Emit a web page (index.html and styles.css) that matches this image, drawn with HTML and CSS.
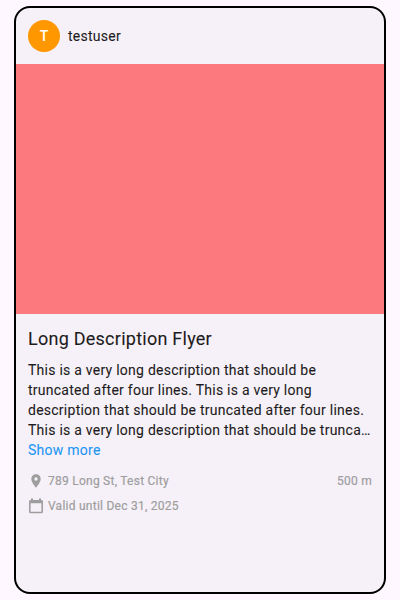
FILE: index.html
```html
<!DOCTYPE html>
<html lang="en">
<head>
<meta charset="utf-8">
<title>Flyer</title>
<link rel="stylesheet" href="styles.css">
</head>
<body>
<article class="card">
  <header class="user"><span class="avatar">T</span><span class="username">testuser</span></header>
  <div class="photo"></div>
  <div class="content">
    <h1 class="title">Long Description Flyer</h1>
    <p class="desc">This is a very long description that should be<br>truncated after four lines. This is a very long<br>description that should be truncated after four lines.<br>This is a very long description that should be trunca…</p>
    <a class="more">Show more</a>
    <div class="meta place">
      <svg class="icon" viewBox="0 0 24 24"><path d="M12 2C8.130 2 5 5.130 5 9c0 5.250 7 13 7 13s7-7.750 7-13c0-3.870-3.130-7-7-7zm0 9.500a2.500 2.500 0 1 1 0-5 2.500 2.500 0 0 1 0 5z"/></svg>
      <span class="label">789 Long St, Test City</span><span class="distance">500 m</span>
    </div>
    <div class="meta">
      <svg class="icon" viewBox="0 0 16 16"><path fill-rule="evenodd" d="M3 .5h2V2h6V.5h2V2h.5A1.500 1.500 0 0 1 15 3.500v10.300a1.500 1.500 0 0 1-1.500 1.500h-11A1.500 1.500 0 0 1 1 13.800V3.500A1.500 1.500 0 0 1 2.500 2H3zM2.600 5.300v8.500h10.800V5.300z"/></svg>
      <span class="label">Valid until Dec 31, 2025</span>
    </div>
  </div>
</article>
</body>
</html>
```
FILE: styles.css
```css
* { box-sizing: border-box; }
body { margin: 0; height: 600px; padding: 6px 14px; background: #fef7ff; font-family: Roboto, sans-serif; color: #1d1b20; }
.card { height: 588px; border: 2px solid #000; border-radius: 16px; background: #f6f1f9; overflow: hidden; }
.user { height: 56px; padding: 12px; display: flex; align-items: center; gap: 8px; }
.avatar { width: 32px; height: 32px; border-radius: 50%; background: #ff9800; color: #fff; display: flex; align-items: center; justify-content: center; font-size: 14px; font-weight: 500; }
.username { font-size: 14px; line-height: 20px; letter-spacing: .25px; }
.photo { height: 250px; background: #fc7a7d; }
.content { padding: 12px; }
.title { margin: 0 0 8px; font-size: 18px; line-height: 26px; font-weight: 400; letter-spacing: .25px; }
.desc { margin: 0; font-size: 14px; line-height: 20px; letter-spacing: .25px; white-space: nowrap; }
.more { display: block; font-size: 14px; line-height: 20px; letter-spacing: .25px; color: #2196f3; }
.meta { display: flex; align-items: center; gap: 4px; height: 17px; margin-top: 8px; font-size: 12px; line-height: 16px; letter-spacing: .25px; color: #9e9e9e; }
.place { margin-top: 12px; }
.icon { width: 16px; height: 16px; fill: currentColor; }
.label { flex: 1; }
.username, .title, .desc, .more { -webkit-text-stroke: .08px currentColor; }
.meta { -webkit-text-stroke: .2px currentColor; }
.icon { stroke: none; }
```
